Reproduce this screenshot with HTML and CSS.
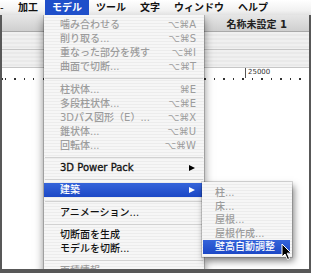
FILE: index.html
```html
<!DOCTYPE html>
<html>
<head>
    <title>モデル</title>
    <meta charset="utf-8">
    <link rel="stylesheet" href="styles.css">
</head>
<body>
<div class="screen">
    <div class="menubar">
        <span class="mb-tail">-</span>
        <span class="mb-item">加工</span>
        <span class="mb-item active">モデル</span>
        <span class="mb-item">ツール</span>
        <span class="mb-item">文字</span>
        <span class="mb-item">ウィンドウ</span>
        <span class="mb-item">ヘルプ</span>
    </div>

    <div class="window">
        <div class="titlebar"><span class="title">名称未設定 1</span></div>
        <div class="toolbar"></div>
        <div class="toolbar"></div>
        <div class="ruler">
            <div class="ruler-labels"><span class="mark">25000</span></div>
            <div class="ticks"></div>
        </div>
        <div class="canvas"></div>

        <div class="menu">
            <div class="item off"><span>噛み合わせる</span><span class="key">⌥⌘A</span></div>
            <div class="item off"><span>削り取る...</span><span class="key">⌥⌘S</span></div>
            <div class="item off"><span>重なった部分を残す</span><span class="key">⌥⌘I</span></div>
            <div class="item off"><span>曲面で切断...</span><span class="key">⌥⌘T</span></div>
            <div class="sep wide"></div>
            <div class="item off"><span>柱状体...</span><span class="key">⌘E</span></div>
            <div class="item off"><span>多段柱状体...</span><span class="key">⌥⌘E</span></div>
            <div class="item off"><span>3Dパス図形（E）...</span><span class="key">⌥⌘X</span></div>
            <div class="item off"><span>錐状体...</span><span class="key">⌥⌘U</span></div>
            <div class="item off"><span>回転体...</span><span class="key">⌥⌘W</span></div>
            <div class="sep"></div>
            <div class="item"><span class="latin">3D Power Pack</span><span class="arrow"></span></div>
            <div class="sep"></div>
            <div class="item selected"><span>建築</span><span class="arrow"></span></div>
            <div class="sep wide"></div>
            <div class="item"><span>アニメーション...</span></div>
            <div class="sep"></div>
            <div class="item"><span>切断面を生成</span></div>
            <div class="item"><span>モデルを切断...</span></div>
            <div class="sep"></div>
            <div class="item off"><span>面積情報...</span></div>
        </div>

        <div class="submenu">
            <div class="sub-item off">柱...</div>
            <div class="sub-item off">床...</div>
            <div class="sub-item off">屋根...</div>
            <div class="sub-item off">屋根作成...</div>
            <div class="sub-item selected">壁高自動調整</div>
        </div>

        <svg class="cursor" width="12" height="18" viewBox="0 0 12 18">
            <path d="M1 1 L1 14 L4 11 L6.5 16.5 L8.6 15.6 L6.2 10.2 L10.2 10.2 Z" fill="#000" stroke="#fff" stroke-width="1" stroke-linejoin="round"/>
        </svg>
    </div>
</div>
</body>
</html>
```

FILE: styles.css
```css
* {
    box-sizing: border-box;
}
body {
    margin: 0;
    font-family: "DejaVu Sans", "Noto Sans CJK JP", sans-serif;
    font-size: 10px;
    font-weight: 500;
    color: #111;
}
.screen {
    width: 311px;
    height: 273px;
    display: flex;
    flex-direction: column;
    overflow: hidden;
    background: #fff;
}

/* menu bar */
.menubar {
    height: 15px;
    flex: none;
    display: flex;
    align-items: center;
    background: linear-gradient(#ffffff, #f1f1f1 70%, #e2e2e2);
    font-weight: bold;
    line-height: 15px;
}
.mb-tail {
    width: 11px;
    font-weight: normal;
}
.mb-item {
    padding: 0 7px;
}
.mb-item.active {
    background: #1f4fca;
    color: #fff;
}

/* document window behind the menu */
.window {
    flex: 1;
    position: relative;
    overflow: hidden;
    display: flex;
    flex-direction: column;
    border: solid #585858;
    border-width: 0 2px 4px 2px;
}
.titlebar {
    height: 17px;
    flex: none;
    display: flex;
    align-items: center;
    justify-content: flex-end;
    padding-right: 22px;
    background: linear-gradient(#e6e6e6, #cfcfcf);
    border-bottom: 1px solid #a9a9a9;
}
.title {
    font-weight: bold;
    color: #222;
}
.toolbar {
    height: 18px;
    flex: none;
    background: repeating-linear-gradient(#f0f0f0 0 2px, #e9e9e9 2px 4px);
    border-bottom: 1px solid #c6c6c6;
}
.ruler {
    height: 12px;
    flex: none;
    display: flex;
    flex-direction: column;
    background: #fff;
}
.ruler-labels {
    flex: 1;
    padding-left: 243px;
}
.mark {
    display: block;
    height: 100%;
    border-left: 1px solid #555;
    padding-left: 2px;
    font-size: 7px;
    font-weight: normal;
    line-height: 9px;
    color: #333;
}
.ticks {
    height: 2px;
    background: repeating-linear-gradient(90deg, #333 0 1px, transparent 1px 9.5px);
    background-position: 3px 0;
}
.canvas {
    flex: 1;
    background: #fff;
}

/* pull-down menu */
.menu {
    position: absolute;
    left: 42px;
    top: 0;
    width: 160px;
    padding-top: 3px;
    background: repeating-linear-gradient(#f6f6f6 0 2px, #ececec 2px 3px);
    box-shadow: 0 0 0 1px rgba(0, 0, 0, 0.18), 0 4px 9px rgba(0, 0, 0, 0.5);
}
.item {
    height: 14px;
    line-height: 14px;
    display: flex;
    justify-content: space-between;
    align-items: center;
    padding: 0 8px 0 16px;
    white-space: nowrap;
}
.latin {
    -webkit-text-stroke: 0.3px #111;
}
.off {
    color: #9c9c9c;
}
.selected {
    background: linear-gradient(#3564da, #1c48c6);
    color: #fff;
}
.arrow {
    width: 0;
    height: 0;
    margin-right: 1px;
    border-left: 6px solid #000;
    border-top: 3.5px solid transparent;
    border-bottom: 3.5px solid transparent;
}
.selected .arrow {
    border-left-color: #fff;
}
.sep {
    height: 8px;
    display: flex;
    align-items: center;
    padding: 0 1px;
}
.sep.wide {
    height: 9px;
}
.sep::after {
    content: "";
    flex: 1;
    height: 1px;
    background: #d2d2d2;
}

/* 建築 submenu */
.submenu {
    position: absolute;
    left: 200px;
    top: 167px;
    width: 90px;
    padding: 4px 2px 3px 1px;
    background: repeating-linear-gradient(#f6f6f6 0 2px, #ececec 2px 3px);
    box-shadow: 0 0 0 1px rgba(0, 0, 0, 0.15), 2px 4px 7px rgba(0, 0, 0, 0.5);
}
.sub-item {
    height: 13.5px;
    line-height: 13.5px;
    padding-left: 12px;
    white-space: nowrap;
}

.cursor {
    position: absolute;
    left: 279px;
    top: 228px;
}
```
